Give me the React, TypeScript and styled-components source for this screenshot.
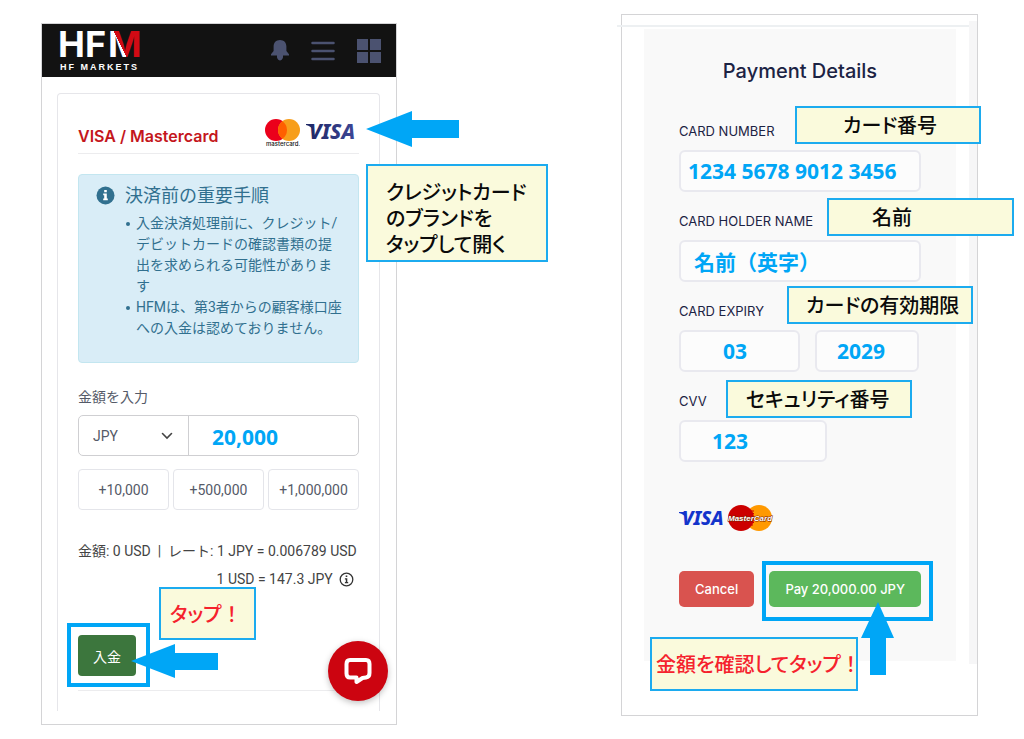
import React from "react";
import styled, { createGlobalStyle } from "styled-components";

const sans = `Roboto, "Noto Sans CJK JP", sans-serif`;
const inter = `Inter, "Noto Sans CJK JP", sans-serif`;
const humanist = `"Noto Sans", "Noto Sans CJK JP", sans-serif`;
const azure = "#00a6f6";

const GlobalStyle = createGlobalStyle`
  *, *::before, *::after { box-sizing: border-box; }
  body { margin: 0; background: #fff; font-family: ${sans}; }
  h1, h2, p, ul { margin: 0; padding: 0; }
  button, input, select { font: inherit; margin: 0; }
`;

const Stage = styled.main`
  display: flex;
  justify-content: space-between;
  align-items: flex-start;
  padding: 14px 46px 14px 41px;
`;

const Screen = styled.section<{ $basis: number; $drop?: number }>`
  position: relative;
  flex: 0 1 ${(p) => p.$basis}px;
  min-width: 0;
  margin-top: ${(p) => p.$drop ?? 0}px;
  border: 1px solid #d4d4d6;
  background: #fff;
`;

/* ---------- deposit screen ---------- */

const TopBar = styled.header`
  display: flex;
  align-items: center;
  justify-content: space-between;
  height: 53px;
  padding: 0 15px 0 17px;
  background: #121212;
`;

const TopActions = styled.nav`
  display: flex;
  align-items: center;
  gap: 22px;
`;

const IconButton = styled.button`
  display: flex;
  padding: 0;
  border: 0;
  background: none;
  color: #4b5270;
`;

const DepositCard = styled.div`
  margin: 16px 16px 13px 15px;
  padding: 0 20px 20px;
  border: 1px solid #e6e6ea;
  border-bottom: 0;
  border-radius: 4px 4px 0 0;
`;

const TitleRow = styled.div`
  display: flex;
  align-items: flex-end;
  justify-content: space-between;
  padding: 24px 2px 5px 0;
  border-bottom: 1px solid #ececee;
`;

const MethodTitle = styled.h2`
  color: #c4161c;
  font: 600 16px/24px ${inter};
`;

const BrandRow = styled.div`
  display: flex;
  align-items: flex-start;
  gap: 6px;
`;

const Alert = styled.div`
  display: grid;
  grid-template-columns: 19px 1fr;
  column-gap: 10px;
  margin-top: 20px;
  padding: 10px 13px 23px 17px;
  border: 1px solid #c3e6f0;
  border-radius: 4px;
  background: #d9edf7;
  color: #31708f;
`;

const AlertTitle = styled.p`
  font-size: 18px;
  line-height: 22px;
`;

const AlertIcon = styled.svg`
  margin-top: 1px;
`;

const AlertList = styled.ul`
  grid-column: 2;
  margin-top: 6px;
  padding-left: 11px;
  list-style: none;
  font-size: 14px;
  line-height: 21px;

  li::before {
    content: "";
    float: left;
    width: 4px;
    height: 4px;
    margin: 9px 0 0 -10px;
    border-radius: 50%;
    background: currentColor;
  }
`;

const AmountLabel = styled.label`
  display: block;
  margin: 24px 0 8px;
  color: #555a68;
  font-size: 14px;
  line-height: 20px;
`;

const AmountGroup = styled.div`
  display: flex;
  height: 41px;
  border: 1px solid #cfcfd2;
  border-radius: 5px;
`;

const CurrencyBox = styled.div`
  display: flex;
  align-items: center;
  flex: 0 0 110px;
  padding-right: 15px;
  border-right: 1px solid #cfcfd2;
  color: #444;
`;

const CurrencySelect = styled.select`
  flex: 1;
  min-width: 0;
  height: 100%;
  padding: 0 0 0 14px;
  border: 0;
  background: none;
  color: #555a68;
  font-size: 14px;
  appearance: none;
`;

const AmountInput = styled.input`
  flex: 1;
  min-width: 0;
  padding: 3px 0 0 23px;
  border: 0;
  background: none;
  color: ${azure};
  font: 700 21px ${humanist};
`;

const QuickRow = styled.div`
  display: grid;
  grid-template-columns: repeat(3, 1fr);
  gap: 4px;
  margin-top: 13px;
`;

const QuickButton = styled.button`
  height: 41px;
  padding: 0;
  border: 1px solid #e4e5ea;
  border-radius: 4px;
  background: #fff;
  color: #555a68;
  font-size: 14px;
`;

const Rates = styled.div`
  display: grid;
  gap: 8px;
  justify-items: end;
  margin-top: 31px;
  padding-right: 4px;
  color: #444;
  font-size: 14px;
  line-height: 20px;
  white-space: pre;
`;

const RateWithIcon = styled.p`
  display: flex;
  align-items: center;
  gap: 6px;
  padding-right: 3px;
`;

const DepositButton = styled.button`
  display: block;
  width: 58px;
  height: 41px;
  margin-top: 46px;
  padding: 0;
  border: 0;
  border-radius: 4px;
  background: #3c763d;
  color: #fff;
  font-size: 14px;
`;

const Rule = styled.hr`
  margin: 14px 0 0;
  border: 0;
  border-top: 1px solid #ececee;
`;

/* ---------- payment screen ---------- */

const PaymentScreen = styled(Screen)`
  padding-bottom: 54px;

  &::after {
    content: "";
    position: absolute;
    top: 6px;
    right: 0;
    bottom: 51px;
    width: 8px;
    background: #f6f6f7;
  }
`;

const TopLine = styled.div`
  height: 2px;
  margin: 10px 8px 2px -5px;
  background: #edf0f2;
`;

const PaymentForm = styled.form`
  margin: 0 21px 0 22px;
  padding: 28px 35px 54px;
  background: #f9f9f9;
  color: #1c2344;
  font-family: ${inter};
`;

const FormTitle = styled.h1`
  margin-bottom: 36px;
  font: 500 20px/28px ${inter};
  text-align: center;
`;

const Field = styled.div`
  margin-bottom: 19px;
`;

const FieldLabel = styled.label`
  display: block;
  margin-bottom: 9px;
  font-size: 13px;
  line-height: 20px;
`;

const InputRow = styled.div`
  display: flex;
  gap: 15px;
`;

const TextInput = styled.input<{ $width?: string; $indent: number }>`
  width: ${(p) => p.$width ?? "100%"};
  height: 42px;
  min-width: 0;
  padding: 0 0 0 ${(p) => p.$indent}px;
  border: 2px solid #e9e9ef;
  border-radius: 6px;
  background: #fcfcfc;
  color: ${azure};
  font: 700 21px ${humanist};
`;

const CardLogos = styled.div`
  display: flex;
  gap: 2px;
  margin-top: 42px;
`;

const FormActions = styled.div`
  display: flex;
  justify-content: space-between;
  margin-top: 39px;
`;

const ActionButton = styled.button<{ $tone: string }>`
  height: 36px;
  padding: 0 16px;
  border: 0;
  border-radius: 5px;
  background: ${(p) => p.$tone};
  color: #fff;
  font: 500 13px ${inter};
  white-space: nowrap;
`;

/* ---------- overlays ---------- */

interface Place {
  $x: number;
  $y: number;
}

const Note = styled.div<Place & { $w: number; $h: number; $indent: number; $red?: boolean }>`
  position: absolute;
  z-index: 2;
  left: ${(p) => p.$x}px;
  top: ${(p) => p.$y}px;
  width: ${(p) => p.$w}px;
  height: ${(p) => p.$h}px;
  display: flex;
  align-items: center;
  padding-left: ${(p) => p.$indent}px;
  border: 2px solid #1cabef;
  background: #fafadc;
  color: ${(p) => (p.$red ? "#f5222d" : "#0a0a0a")};
  font: 500 20px/26px "Noto Sans CJK JP", sans-serif;
  font-feature-settings: "palt";
  white-space: nowrap;
`;

const TallNote = styled(Note)`
  padding-top: 10px;
`;

const FullWidth = styled.span`
  font-feature-settings: normal;
`;

const Highlight = styled.div<Place & { $w: number; $h: number }>`
  position: absolute;
  z-index: 1;
  left: ${(p) => p.$x}px;
  top: ${(p) => p.$y}px;
  width: ${(p) => p.$w}px;
  height: ${(p) => p.$h}px;
  border: 4px solid ${azure};
  pointer-events: none;
`;

const Arrow = styled.svg<Place>`
  position: absolute;
  z-index: 3;
  left: ${(p) => p.$x}px;
  top: ${(p) => p.$y}px;
  fill: ${azure};
  pointer-events: none;
`;

const ChatButton = styled.button`
  position: absolute;
  right: 8px;
  bottom: 23px;
  display: flex;
  align-items: center;
  justify-content: center;
  width: 60px;
  height: 60px;
  padding: 0;
  border: 0;
  border-radius: 50%;
  background: #cc0410;
  box-shadow: 0 2px 6px rgba(0, 0, 0, 0.25);
`;

/* ---------- drawings ---------- */

const HfmLogo = () => (
  <svg width="100" height="53" viewBox="0 0 100 53" role="img" aria-label="HFM HF Markets">
    <defs>
      <linearGradient id="hfm-m" gradientUnits="userSpaceOnUse" x1="61" y1="20" x2="71" y2="15">
        <stop offset="0" stopColor="#fff" />
        <stop offset="0" stopColor="#d20a14" />
      </linearGradient>
    </defs>
    <g fontFamily="Inter, sans-serif" fontWeight="700" fontSize="36">
      <text x="-1" y="33" fill="#fff">HF</text>
      <text x="49" y="33" fill="url(#hfm-m)">M</text>
    </g>
    <text x="1" y="46" fontFamily="Liberation Sans, sans-serif" fontWeight="700" fontSize="9" fill="#fff" letterSpacing="2">HF MARKETS</text>
  </svg>
);

const Bell = () => (
  <svg width="18" height="21" viewBox="0 0 18 21" fill="currentColor" aria-hidden="true">
    <path d="M9 0C5 0 2.600 2.800 2.600 6.500V11L0 14.200V15.500H6V17.500C6.500 19.500 8 20.500 9 20.500S11.500 19.500 12 17.500V15.500H18V14.200L15.400 11V6.500C15.400 2.800 13 0 9 0Z" />
  </svg>
);

const Bars = () => (
  <svg width="24" height="20" viewBox="0 0 24 20" stroke="currentColor" strokeWidth="2.500" strokeLinecap="round" aria-hidden="true">
    <path d="M1.500 2H22.500M1.500 10H22.500M1.500 18H22.500" />
  </svg>
);

const Tiles = () => (
  <svg width="24" height="24" viewBox="0 0 24 24" fill="currentColor" aria-hidden="true">
    <path d="M0 0H11V11H0ZM13 0H24V11H13ZM0 13H11V24H0ZM13 13H24V24H13Z" />
  </svg>
);

const MastercardNew = () => (
  <svg width="36" height="30" viewBox="0 0 36 30" role="img" aria-label="mastercard">
    <circle cx="12" cy="12" r="11" fill="#eb001b" />
    <circle cx="25" cy="12" r="11" fill="#f79e1b" />
    <path d="M18.500 3.130A11 11 0 0 1 18.500 20.870A11 11 0 0 1 18.500 3.130Z" fill="#ff5f00" />
    <text x="2" y="28" fontFamily="Inter, sans-serif" fontSize="6" fontWeight="500" fill="#111">mastercard.</text>
  </svg>
);

interface VisaProps {
  id: string;
  from: string;
  to: string;
  width: number;
  size: number;
}

const VisaMark = ({ id, from, to, width, size }: VisaProps) => {
  const cap = 21 - Math.round(size * 0.71);
  return (
    <svg width={width} height="28" viewBox={`0 0 ${width} 28`} role="img" aria-label="VISA">
      <defs>
        <linearGradient id={id}>
          <stop offset="0" stopColor={from} />
          <stop offset="1" stopColor={to} />
        </linearGradient>
      </defs>
      <path d={`M0 ${cap}H6L8 ${cap + 7}Q5 ${cap + 2} 0 ${cap + 1}Z`} fill={from} />
      <text x="3" y="21" fontFamily="Noto Sans, sans-serif" fontWeight="800" fontStyle="italic" fontSize={size} fill={`url(#${id})`}>
        VISA
      </text>
    </svg>
  );
};

const MastercardClassic = () => (
  <svg width="48" height="28" viewBox="0 0 48 28" role="img" aria-label="MasterCard">
    <circle cx="32" cy="14" r="13" fill="#ff9900" />
    <circle cx="14" cy="14" r="13" fill="#cc0000" />
    <path d="M21 7H27M20 9.500H27M20 18.500H27M20 21H26" stroke="#cc0000" strokeWidth="1" />
    <text x="1" y="17" fontFamily="Liberation Sans, sans-serif" fontWeight="700" fontStyle="italic" fontSize="8" fill="#fff" stroke="#7a2000" strokeWidth="1" paintOrder="stroke">MasterCard</text>
  </svg>
);

const InfoFilled = () => (
  <AlertIcon width="19" height="19" viewBox="0 0 19 19" aria-hidden="true">
    <circle cx="9.500" cy="9.500" r="9" fill="#31708f" />
    <path d="M8.200 4H10.800V6.200H8.200ZM7.200 7.600H10.800V12.600H11.800V14.200H7.200V12.600H8.200V9.200H7.200Z" fill="#fff" />
  </AlertIcon>
);

const InfoOutline = () => (
  <svg width="15" height="15" viewBox="0 0 15 15" aria-hidden="true">
    <circle cx="7.500" cy="7.500" r="6.300" fill="none" stroke="#333" strokeWidth="1.300" />
    <path d="M6.700 3.500H8.300V5.100H6.700ZM5.900 6.300H8.300V10H9.200V11.200H5.900V10H6.800V7.400H5.900Z" fill="#333" />
  </svg>
);

const Chevron = () => (
  <svg width="12" height="8" viewBox="0 0 12 8" fill="none" stroke="currentColor" strokeWidth="1.600" strokeLinecap="round" aria-hidden="true">
    <path d="M1.500 1.500L6 6L10.500 1.500" />
  </svg>
);

const ChatBubble = () => (
  <svg width="28" height="28" viewBox="0 0 28 28" fill="none" stroke="#fff" strokeWidth="4" strokeLinejoin="round" aria-hidden="true">
    <path d="M6 3H22Q25.500 3 25.500 7V16Q25.500 20 22 20.500L18.500 21L12.500 25V20.500H6Q2.500 20.500 2.500 16.500V7Q2.500 3 6 3Z" />
  </svg>
);

const DepositScreen = () => (
  <Screen $basis={356} $drop={9}>
    <TopBar>
      <HfmLogo />
      <TopActions aria-label="Account">
        <IconButton type="button" aria-label="Notifications"><Bell /></IconButton>
        <IconButton type="button" aria-label="Menu"><Bars /></IconButton>
        <IconButton type="button" aria-label="Apps"><Tiles /></IconButton>
      </TopActions>
    </TopBar>

    <DepositCard>
      <TitleRow>
        <MethodTitle>VISA / Mastercard</MethodTitle>
        <BrandRow>
          <MastercardNew />
          <VisaMark id="visa-navy" from="#1f2866" to="#3d4696" width={51} size={21} />
        </BrandRow>
      </TitleRow>

      <Alert role="note">
        <InfoFilled />
        <AlertTitle>決済前の重要手順</AlertTitle>
        <AlertList>
          <li>入金決済処理前に、クレジット/デビットカードの確認書類の提出を求められる可能性があります</li>
          <li>HFMは、第3者からの顧客様口座への入金は認めておりません。</li>
        </AlertList>
      </Alert>

      <AmountLabel htmlFor="amount">金額を入力</AmountLabel>
      <AmountGroup>
        <CurrencyBox>
          <CurrencySelect aria-label="通貨" defaultValue="JPY">
            <option>JPY</option>
          </CurrencySelect>
          <Chevron />
        </CurrencyBox>
        <AmountInput id="amount" defaultValue="20,000" />
      </AmountGroup>

      <QuickRow>
        {["+10,000", "+500,000", "+1,000,000"].map((step) => (
          <QuickButton type="button" key={step}>{step}</QuickButton>
        ))}
      </QuickRow>

      <Rates>
        <p>金額: 0 USD  |  レート: 1 JPY = 0.006789 USD</p>
        <RateWithIcon>1 USD = 147.3 JPY<InfoOutline /></RateWithIcon>
      </Rates>

      <DepositButton type="button">入金</DepositButton>
      <Rule />
    </DepositCard>

    <ChatButton type="button" aria-label="Chat"><ChatBubble /></ChatButton>

    <Arrow $x={324} $y={87} width="94" height="38" viewBox="0 0 94 38">
      <path d="M0 18L46 0V9H93V27H46V36Z" />
    </Arrow>
    <TallNote $x={324} $y={140} $w={182} $h={98} $indent={18}>
      クレジットカード<br />のブランドを<br />タップして開く
    </TallNote>
    <Highlight $x={25} $y={599} $w={83} $h={64} />
    <Note $x={117} $y={563} $w={97} $h={53} $indent={9} $red>
      <span>タップ<FullWidth>！</FullWidth></span>
    </Note>
    <Arrow $x={89} $y={619} width="88" height="36" viewBox="0 0 88 36">
      <path d="M0 18L44 1V10H87V27H44V35Z" />
    </Arrow>
  </Screen>
);

const Payment = () => (
  <PaymentScreen $basis={357}>
    <TopLine />
    <PaymentForm>
      <FormTitle>Payment Details</FormTitle>
      <Field>
        <FieldLabel htmlFor="number">CARD NUMBER</FieldLabel>
        <TextInput id="number" $indent={7} defaultValue="1234 5678 9012 3456" />
      </Field>
      <Field>
        <FieldLabel htmlFor="holder">CARD HOLDER NAME</FieldLabel>
        <TextInput id="holder" $indent={13} defaultValue="名前（英字）" />
      </Field>
      <Field>
        <FieldLabel htmlFor="month">CARD EXPIRY</FieldLabel>
        <InputRow>
          <TextInput id="month" $width="50%" $indent={42} defaultValue="03" />
          <TextInput aria-label="Expiry year" $width="43%" $indent={20} defaultValue="2029" />
        </InputRow>
      </Field>
      <Field>
        <FieldLabel htmlFor="cvv">CVV</FieldLabel>
        <TextInput id="cvv" $width="61%" $indent={31} defaultValue="123" />
      </Field>
      <CardLogos>
        <VisaMark id="visa-blue" from="#1434cb" to="#1434cb" width={46} size={19} />
        <MastercardClassic />
      </CardLogos>
      <FormActions>
        <ActionButton type="button" $tone="#d9534f">Cancel</ActionButton>
        <ActionButton type="button" $tone="#5cb85c">Pay 20,000.00 JPY</ActionButton>
      </FormActions>
    </PaymentForm>

    <Note $x={173} $y={91} $w={186} $h={38} $indent={46}>カード番号</Note>
    <Note $x={205} $y={183} $w={187} $h={38} $indent={43}>名前</Note>
    <Note $x={165} $y={271} $w={186} $h={38} $indent={17}>カードの有効期限</Note>
    <Note $x={104} $y={365} $w={186} $h={38} $indent={18}>セキュリティ番号</Note>
    <Highlight $x={140} $y={546} $w={171} $h={60} />
    <Note $x={28} $y={622} $w={208} $h={54} $indent={4} $red>
      <span>金額を確認してタップ<FullWidth>！</FullWidth></span>
    </Note>
    <Arrow $x={239} $y={587} width="34" height="74" viewBox="0 0 34 74">
      <path d="M17 0L33 36H25V73H9V36H0Z" />
    </Arrow>
  </PaymentScreen>
);

export default function App() {
  return (
    <>
      <GlobalStyle />
      <Stage>
        <DepositScreen />
        <Payment />
      </Stage>
    </>
  );
}
